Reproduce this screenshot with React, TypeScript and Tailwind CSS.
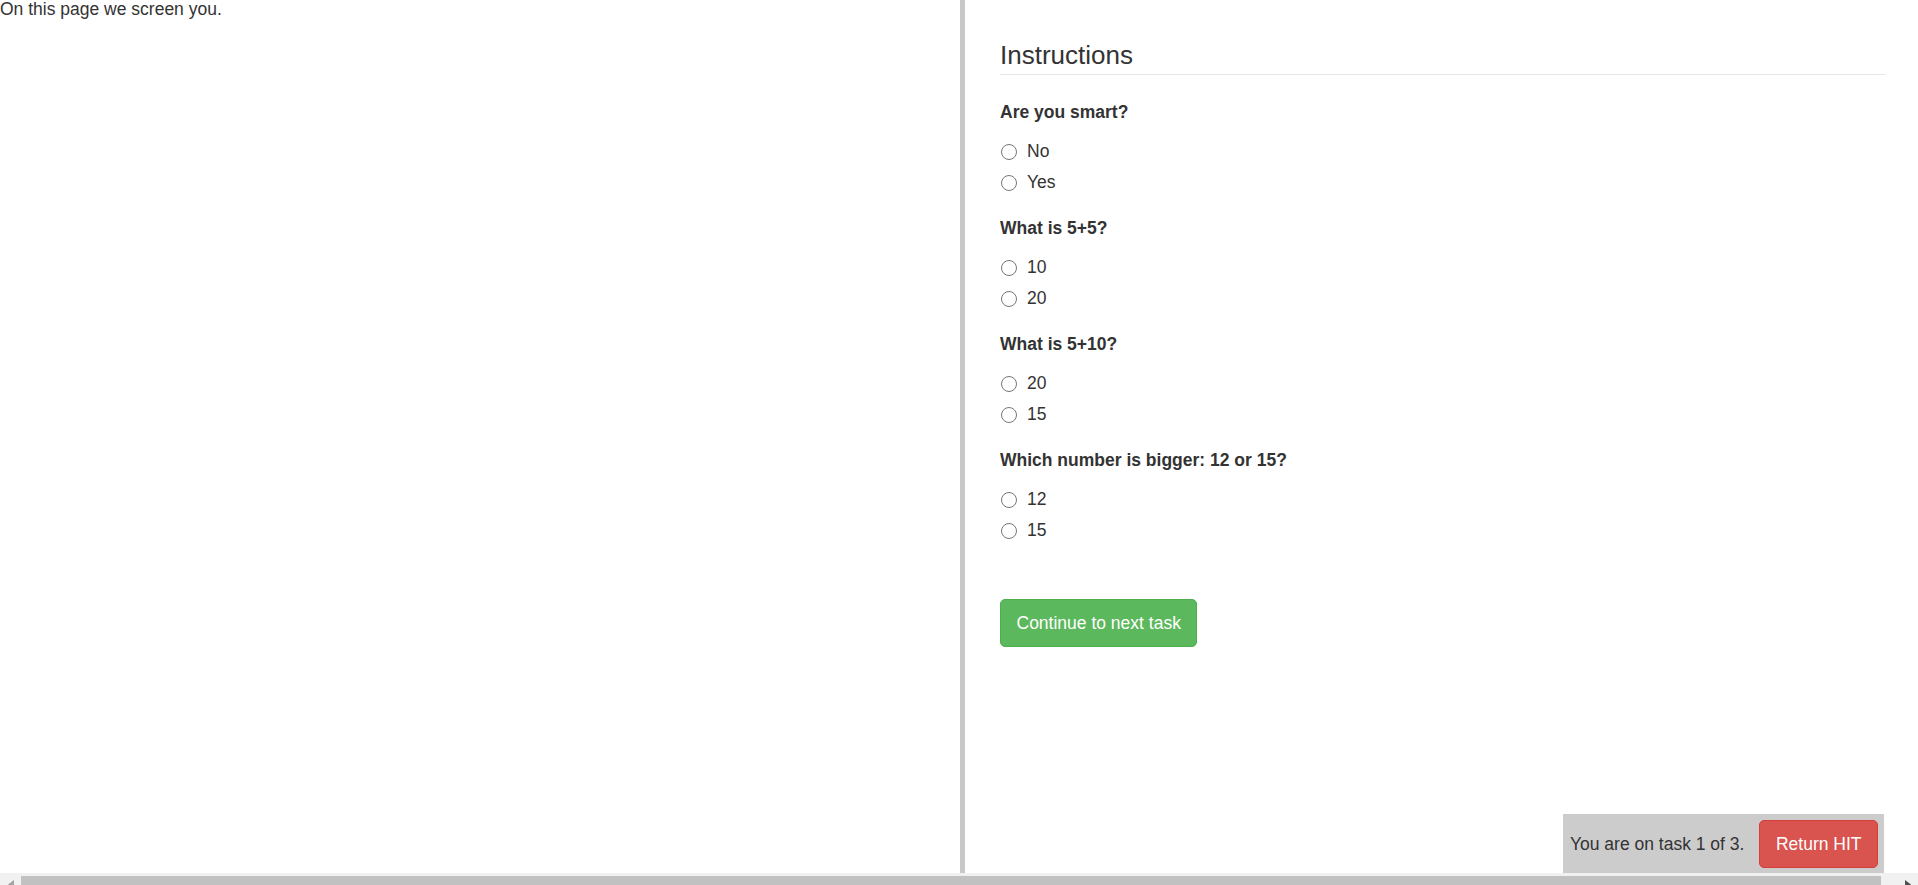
import React from "react";

const questions: { q: string; options: string[] }[] = [
  { q: "Are you smart?", options: ["No", "Yes"] },
  { q: "What is 5+5?", options: ["10", "20"] },
  { q: "What is 5+10?", options: ["20", "15"] },
  { q: "Which number is bigger: 12 or 15?", options: ["12", "15"] },
];

function Radio({ label }: { label: string }) {
  return (
    <label className="flex items-center h-[31px]">
      <span className="ml-[1px] w-[16px] h-[16px] rounded-full border border-[#767676] bg-white shrink-0" />
      <span className="ml-[10px] leading-[25px]">{label}</span>
    </label>
  );
}

export default function App() {
  return (
    <div className="h-[885px] w-full overflow-hidden flex flex-col bg-white text-[#333333] font-['Liberation_Sans',Arial,sans-serif] text-[17.5px]">
      <div className="h-[873px] shrink-0 flex">
        {/* left pane */}
        <div className="w-[960px] shrink-0">
          <div className="leading-[18px]">On this page we screen you.</div>
        </div>
        {/* divider */}
        <div className="w-[5px] shrink-0 bg-[#c8c8c8]" />
        {/* right pane */}
        <div className="flex-1 flex flex-col">
          <div className="flex-1 pl-[35px] pr-[33px]">
            <div className="mt-[40px] pb-[4px] border-b border-[#e5e5e5]">
              <h3 className="text-[26px] leading-[30px] font-normal">Instructions</h3>
            </div>
            <div className="mt-[24.5px] flex flex-col">
              {questions.map((item, i) => (
                <div key={i} className="flex flex-col mb-[17.6px]">
                  <div className="font-bold leading-[25px] h-[25px]">{item.q}</div>
                  <div className="mt-[11.5px] flex flex-col">
                    {item.options.map((o, j) => (
                      <Radio key={j} label={o} />
                    ))}
                  </div>
                </div>
              ))}
            </div>
            <button className="mt-[35px] h-[48px] px-[15.5px] flex items-center text-white bg-[#5cb85c] border border-[#4cae4c] rounded-[5px] text-[17.5px]">
              Continue to next task
            </button>
          </div>
          <div className="self-end mr-[34px] h-[59px] bg-[#cccccc] flex items-start pt-[6px] pl-[7px] pr-[6px]">
            <span className="h-[48px] flex items-center leading-[25px]">You are on task 1 of 3.</span>
            <button className="ml-[15px] h-[48px] px-[15.5px] flex items-center text-white bg-[#d9534f] border border-[#d43f3a] rounded-[5px] text-[17.5px]">
              Return HIT
            </button>
          </div>
        </div>
      </div>
      {/* horizontal scrollbar */}
      <div className="h-[21px] shrink-0 flex bg-[#f1f1f1]">
        <div className="w-[21px] h-[21px] shrink-0 flex items-center justify-center">
          <svg width="6" height="9" viewBox="0 0 6 9" className="ml-[1px] mt-[2px]">
            <polygon points="6,0 6,9 0,4.5" fill="#a3a3a3" />
          </svg>
        </div>
        <div className="w-[1860px] shrink-0 mt-[3px] h-[15px] bg-[#c1c1c1]" />
        <div className="flex-1" />
        <div className="w-[21px] h-[21px] shrink-0 flex items-center justify-center">
          <svg width="6" height="9" viewBox="0 0 6 9" className="mt-[2px]">
            <polygon points="0,0 0,9 6,4.5" fill="#505050" />
          </svg>
        </div>
      </div>
    </div>
  );
}
